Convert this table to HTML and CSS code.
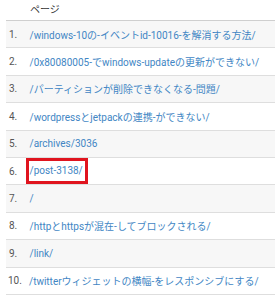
FILE: index.html
```html
<!DOCTYPE html>
<html lang="ja">
<head>
<meta charset="utf-8">
<link rel="stylesheet" href="styles.css">
</head>
<body>
<div class="table">
  <div class="head">ページ</div>
  <div class="row odd"><span class="num">1.</span><a class="link">/windows-10の-イベントid-10016-を解消する方法/</a></div>
  <div class="row"><span class="num">2.</span><a class="link">/0x80080005-でwindows-updateの更新ができない/</a></div>
  <div class="row odd"><span class="num">3.</span><a class="link">/パーティションが削除できなくなる-問題/</a></div>
  <div class="row"><span class="num">4.</span><a class="link">/wordpressとjetpackの連携-ができない/</a></div>
  <div class="row odd"><span class="num">5.</span><a class="link">/archives/3036</a></div>
  <div class="row"><span class="num">6.</span><a class="link marked">/post-3138/</a></div>
  <div class="row odd"><span class="num">7.</span><a class="link">/</a></div>
  <div class="row"><span class="num">8.</span><a class="link">/httpとhttpsが混在-してブロックされる/</a></div>
  <div class="row odd"><span class="num">9.</span><a class="link">/link/</a></div>
  <div class="row"><span class="num">10.</span><a class="link">/twitterウィジェットの横幅-をレスポンシブにする/</a></div>
</div>
</body>
</html>
```
FILE: styles.css
```css
html, body {
  margin: 0;
  padding: 0;
  background: #fff;
}
body {
  font-family: Roboto, "Noto Sans CJK JP", sans-serif;
  font-size: 10px;
  overflow: hidden;
}
.table {
  margin-left: 6px;
  width: 269px;
}
.head {
  height: 21px;
  box-sizing: border-box;
  border-bottom: 1px solid #cfcfcf;
  padding-left: 24px;
  line-height: 20px;
  color: #333;
}
.row {
  height: 27.4px;
  box-sizing: border-box;
  border-bottom: 1px solid #dedede;
  display: flex;
  align-items: center;
  white-space: nowrap;
}
.row.odd {
  background: #f7f7f7;
}
.num {
  width: 23.5px;
  padding-left: 3px;
  box-sizing: border-box;
  color: #555;
  flex: none;
}
.row:last-child .num {
  width: 23px;
  padding-left: 2px;
}
.link {
  color: #4286c4;
}
.marked {
  display: inline-block;
  border: 3px solid #e0141e;
  padding: 4px 2px 4px 1px;
  margin-left: -4px;
  line-height: 12px;
}
```
